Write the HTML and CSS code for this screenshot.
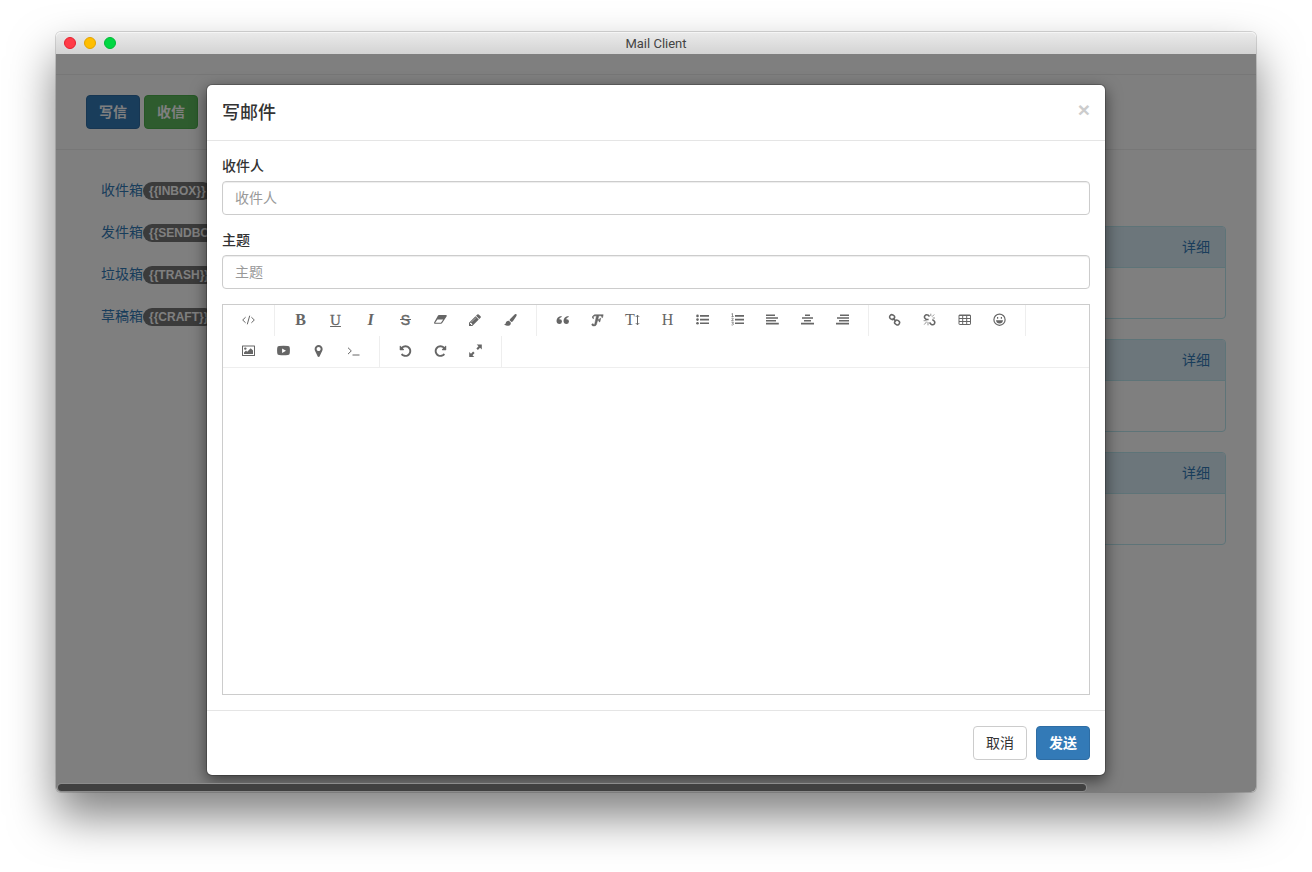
FILE: index.html
```html
<!DOCTYPE html>
<html lang="zh-CN">
<head>
<meta charset="utf-8">
<title>Mail Client</title>
<link rel="stylesheet" href="styles.css">
</head>
<body>
<div class="window">
  <header class="titlebar">
    <div class="lights"><span class="light light-close"></span><span class="light light-min"></span><span class="light light-max"></span></div>
    <div class="titlebar-text">Mail Client</div>
    <div></div>
  </header>
  <div class="stage">
    <div class="page">
      <div class="actions">
        <button class="btn btn-primary" type="button">写信</button>
        <button class="btn btn-success" type="button">收信</button>
      </div>
      <div class="columns">
        <nav class="folders">
          <a href="#inbox">收件箱<span class="badge">{{INBOX}}</span></a>
          <a href="#sendbox">发件箱<span class="badge">{{SENDBOX}}</span></a>
          <a href="#trash">垃圾箱<span class="badge">{{TRASH}}</span></a>
          <a href="#craft">草稿箱<span class="badge">{{CRAFT}}</span></a>
        </nav>
        <main class="mails">
          <article class="panel"><div class="panel-heading"><a href="#mail-1">详细</a></div><div class="panel-body"></div></article>
          <article class="panel"><div class="panel-heading"><a href="#mail-2">详细</a></div><div class="panel-body"></div></article>
          <article class="panel"><div class="panel-heading"><a href="#mail-3">详细</a></div><div class="panel-body"></div></article>
        </main>
      </div>
    </div>
    <div class="backdrop">
      <form class="modal" role="dialog" aria-labelledby="modal-title">
        <div class="modal-header">
          <h4 class="modal-title" id="modal-title">写邮件</h4>
          <button class="close" type="button" aria-label="关闭">×</button>
        </div>
        <div class="modal-body">
          <div class="field">
            <label for="to">收件人</label>
            <input id="to" type="text" placeholder="收件人">
          </div>
          <div class="field">
            <label for="subject">主题</label>
            <input id="subject" type="text" placeholder="主题">
          </div>
          <div class="editor">
            <div class="toolbar">
              <div class="group">
                <button type="button" aria-label="源码"><svg class="line" viewBox="0 0 15 15"><path d="M4.6 4.2L1.7 7l2.9 2.8M10.4 4.2L13.3 7l-2.9 2.8M8.7 2.7L6.3 11.3"/></svg></button>
              </div>
              <div class="group">
                <button type="button" aria-label="粗体"><span class="glyph bold">B</span></button>
                <button type="button" aria-label="下划线"><span class="glyph underline">U</span></button>
                <button type="button" aria-label="斜体"><span class="glyph italic">I</span></button>
                <button type="button" aria-label="删除线"><span class="glyph strike">S</span></button>
                <button type="button" aria-label="清除格式"><svg viewBox="0 0 15 15"><path fill-rule="evenodd" d="M5.9 2h7.3q.9.2.5 1.3L9.2 10q-.5.7-1.200.7H1.600q-.9-.2-.5-1.200L5 2.600Q5.400 2 5.900 2zM4.400 6.400L2.200 9.700h5.700l2.300-3.300z"/></svg></button>
                <button type="button" aria-label="文字颜色"><svg viewBox="0 0 1920 1920"><path d="M491 1536l91-91-235-235-91 91v107h128v128h107zm523-928q0-22-22-22-10 0-17 7l-542 542q-7 7-7 17 0 22 22 22 10 0 17-7l542-542q7-7 7-17zm-54-192l416 416-832 832h-416v-416zm683 96q0 53-37 90l-166 166-416-416 166-165q36-38 90-38 53 0 91 38l235 234q37 39 37 91z"/></svg></button>
                <button type="button" aria-label="背景颜色"><svg viewBox="0 0 15 15"><path d="M12.500 1.100q1.200-.2 1.200 1-.1.700-.6 1.500L9.900 8.300q-.7.800-1.500.8L6.500 7.300q.1-.9.900-1.600l4.200-4.100q.5-.4.900-.5zM5.900 7.800l2 1.900q0 2-1.400 2.700-2.700 1.200-5.100-.8-.3-.5.100-.6.900.3 1.200-.4.200-2.900 3.200-2.800z"/></svg></button>
              </div>
              <div class="group">
                <button type="button" aria-label="引用"><svg viewBox="0 0 15 15"><path d="M6.600 3.100v.8q-2.200.6-2.500 2.300 2.900-.3 2.900 2.300-.2 2.500-2.600 2.600Q1.700 11 1.500 8q.2-4.300 5.100-4.900zM13.600 3.100v.8q-2.200.6-2.500 2.300 2.900-.3 2.900 2.300-.2 2.500-2.600 2.600Q8.700 11 8.500 8q.2-4.300 5.100-4.900z"/></svg></button>
                <button type="button" aria-label="字体"><svg class="script" viewBox="1 0 14 14"><path d="M5.300 1.600h8l-.6 2.700h-.6q.1-1.500-1.200-1.700H9.200L8.300 6h1.300l.9-1.100h.5l-.8 3.400h-.6l-.1-1.200H8l-1 3.600q-.3 1.400-2.400 1.400-1.900 0-2-1.100.1-1.100 1.200-1 .9.200.6 1.200.7.100 1-.9l1.700-7.700Q4.200 2.500 4 3.800q.1.900.7 1.100-.8.500-1.400-.3-.6-1.900 2-3z"/></svg></button>
                <button type="button" aria-label="字号"><span class="glyph">T</span><svg class="line arrow" viewBox="0 0 5 15"><path d="M2.500 2.300v9.400M.8 3.900L2.500 2.200l1.700 1.700M.8 10.100l1.700 1.700 1.700-1.700"/></svg></button>
                <button type="button" aria-label="标题"><span class="glyph heading">H</span></button>
                <button type="button" aria-label="无序列表"><svg viewBox="0 0 15 15"><path d="M5 2h9v1.700H5zM5 5.700h9v1.700H5zM5 9.400h9v1.700H5z"/><circle cx="2.500" cy="2.900" r="1.300"/><circle cx="2.500" cy="6.600" r="1.300"/><circle cx="2.500" cy="10.300" r="1.300"/></svg></button>
                <button type="button" aria-label="有序列表"><svg viewBox="0 0 15 15"><path d="M5 2h9v1.700H5zM5 5.700h9v1.700H5zM5 9.400h9v1.700H5z"/><path class="thin" d="M1.500 1l1-.5v3M1.500 3.500h2.200M1.500 5.300q2-.6 1.900.5L1.600 7.600h2M1.500 9.200h1.900l-.9 1.200q1.200 0 1 1-.5.900-2 .5"/></svg></button>
                <button type="button" aria-label="左对齐"><svg viewBox="0 0 15 15"><path d="M1 1.400h9V3H1zM1 4.200h12v1.600H1zM1 7h10v1.600H1zM1 9.800h12.800v1.600H1z"/></svg></button>
                <button type="button" aria-label="居中"><svg viewBox="0 0 15 15"><path d="M5 1.400h5V3H5zM2 4.200h11v1.600H2zM4 7h7v1.600H4zM1 9.800h13v1.600H1z"/></svg></button>
                <button type="button" aria-label="右对齐"><svg viewBox="0 0 15 15"><path d="M5 1.400h9V3H5zM2 4.200h12v1.600H2zM4 7h10v1.600H4zM1 9.800h13v1.600H1z"/></svg></button>
              </div>
              <div class="group">
                <button type="button" aria-label="链接"><svg class="line thick" viewBox="0 0 15 15"><rect x="2.600" y="1.900" width="5" height="4.400" rx="2.100" transform="rotate(30 5.100 4.100)"/><rect x="7.600" y="7.300" width="5" height="4.400" rx="2.100" transform="rotate(30 10.100 9.500)"/><path d="M5.800 5.100l3.400 3.300"/></svg></button>
                <button type="button" aria-label="取消链接"><svg class="line thick" viewBox="0 0 15 15"><path d="M6.600 6.500H4.300Q1.700 5 2.700 2.900 4.200 1 6.200 2.200L7.500 3.500M7.500 9.400l1.700 1.900q1.900 1.200 3.300-.6 1-2-1-3.300l-1.200-.7"/><path class="thin" d="M8.800 3V.7M10 3.700L12.200 1.500M10.700 5H13M6 9v3.300M4.800 8.600l-2.600 3M4.400 7.700H1.600"/></svg></button>
                <button type="button" aria-label="表格"><svg class="line" viewBox="0 0 15 15"><rect x="2" y="2" width="11.500" height="9.500" rx=".6"/><path d="M2 2.500h11.500M2 5.500h11.500M2 8.500h11.500M5.700 2v9.500M9.700 2v9.500"/></svg></button>
                <button type="button" aria-label="表情"><svg class="line smile" viewBox="0 0 15 15"><circle cx="7.500" cy="6.700" r="5.600"/><path fill="#666" stroke="none" d="M4 7.300h7q-.5 3.200-3.500 3.200T4 7.300z"/><path d="M5.600 3.900v1.800M9.400 3.900v1.800"/></svg></button>
              </div>
              <div class="group">
                <button type="button" aria-label="图片"><svg viewBox="0 0 15 15"><path fill-rule="evenodd" d="M1.500 1.500h12q.5 0 .5.500v9.500q0 .5-.5.500h-12q-.5 0-.5-.5V2q0-.5.5-.5zM2 2.500V11h11V2.500z"/><circle cx="4.300" cy="4.600" r="1.200"/><path d="M3 10V8.500l2-2 1.200 1.200 3.500-3.500L12 6.500V10z"/></svg></button>
                <button type="button" aria-label="视频"><svg viewBox="0 0 15 15"><path fill-rule="evenodd" d="M3 2q4.500-.5 9 0 1.800.1 1.800 2.100.3 2.400 0 4.900-.2 1.800-1.800 2-4.500.5-9 0-1.700-.1-1.800-2-.3-2.500 0-4.900Q1.300 2.100 3 2zm3.100 2.400v4.500l3.900-2.200z"/></svg></button>
                <button type="button" aria-label="位置"><svg viewBox="-80 0 1920 1920"><path d="M1152 640q0-106-75-181t-181-75-181 75-75 181 75 181 181 75 181-75 75-181zm256 0q0 109-33 179l-364 774q-16 33-47.500 52t-67.500 19-67.500-19-46.500-52l-365-774q-33-70-33-179 0-212 150-362t362-150 362 150 150 362z"/></svg></button>
                <button type="button" aria-label="代码"><svg class="line" viewBox="0 0 15 15"><path d="M2 3.700l3.300 3.200L2 10.100M6.500 11H13.500"/></svg></button>
              </div>
              <div class="group">
                <button type="button" aria-label="撤销"><svg viewBox="-100 -50 2000 2000"><path d="M1664 896q0 156-61 298t-164 245-245 164-298 61q-172 0-327-72.500t-264-204.500q-7-10-6.500-22.500t8.500-20.500l137-138q10-9 25-9 16 2 23 12 73 95 179 147t225 52q104 0 198.500-40.500t163.500-109.500 109.500-163.500 40.500-198.500-40.500-198.500-109.500-163.500-163.500-109.500-198.500-40.500q-98 0-188 35.500t-160 101.500l137 138q31 30 14 69-17 40-59 40h-448q-26 0-45-19t-19-45v-448q0-42 40-59 39-17 69 14l130 129q107-101 244.500-156.500t284.500-55.500q156 0 298 61t245 164 164 245 61 298z"/></svg></button>
                <button type="button" aria-label="重做"><svg viewBox="-100 -50 2000 2000"><path transform="translate(1792) scale(-1 1)" d="M1664 896q0 156-61 298t-164 245-245 164-298 61q-172 0-327-72.500t-264-204.500q-7-10-6.500-22.500t8.500-20.500l137-138q10-9 25-9 16 2 23 12 73 95 179 147t225 52q104 0 198.500-40.500t163.500-109.500 109.500-163.500 40.500-198.500-40.500-198.500-109.500-163.500-163.500-109.500-198.500-40.500q-98 0-188 35.500t-160 101.500l137 138q31 30 14 69-17 40-59 40h-448q-26 0-45-19t-19-45v-448q0-42 40-59 39-17 69 14l130 129q107-101 244.500-156.500t284.500-55.500q156 0 298 61t245 164 164 245 61 298z"/></svg></button>
                <button type="button" aria-label="全屏"><svg viewBox="0 0 15 15"><path d="M8.700.5h5.100v5.100L12 3.800 9.900 5.900 8.400 4.400l2.100-2.100zM1.200 7.900L3 9.700l2.100-2.100 1.500 1.500-2.100 2.100L6.300 13H1.200z"/></svg></button>
              </div>
            </div>
            <textarea aria-label="邮件正文"></textarea>
          </div>
        </div>
        <div class="modal-footer">
          <button class="btn btn-default" type="button">取消</button>
          <button class="btn btn-primary" type="submit">发送</button>
        </div>
      </form>
    </div>
    <div class="scrollbar"></div>
  </div>
</div>
</body>
</html>
```
FILE: styles.css
```css
* { box-sizing: border-box; }

body {
  margin: 0;
  min-height: 100vh;
  padding: 32px 56px 80px;
  display: flex;
  background: #fff;
  color: #333;
  font-family: "Liberation Sans", "Noto Sans CJK SC", sans-serif;
  font-size: 14px;
  line-height: 20px;
}

a { color: #337ab7; text-decoration: none; }

button, input, textarea { font: inherit; color: inherit; }

/* Application window */
.window {
  flex: 1;
  min-width: 0;
  display: flex;
  flex-direction: column;
  border-radius: 5px;
  box-shadow: 0 0 0 1px rgba(0, 0, 0, .15), 0 24px 46px rgba(0, 0, 0, .5);
}

.titlebar {
  display: grid;
  grid-template-columns: 1fr auto 1fr;
  align-items: center;
  height: 22px;
  padding: 0 8px;
  border-radius: 5px 5px 0 0;
  background: linear-gradient(#ebebeb, #d3d3d3);
  box-shadow: inset 0 1px 0 #f5f5f5;
}

.lights { display: flex; gap: 8px; }

.light { width: 12px; height: 12px; border-radius: 50%; border: 1px solid; }
.light-close { background: #ff3b47; border-color: #e5202f; }
.light-min { background: #ffbe00; border-color: #e3a300; }
.light-max { background: #00d742; border-color: #00b935; }

.titlebar-text {
  padding-top: 2px;
  font-family: Roboto, sans-serif;
  font-size: 13px;
  color: #444;
}

.stage {
  position: relative;
  flex: 1;
  overflow: hidden;
  border-radius: 0 0 5px 5px;
  background: #fff;
}

/* Mailbox page */
.page { padding-top: 20px; }

.actions {
  display: flex;
  gap: 4px;
  padding: 20px 30px;
  border: solid #eee;
  border-width: 1px 0;
}

.columns {
  display: grid;
  grid-template-columns: 1fr 5fr;
  gap: 30px;
  padding: 20px 30px;
}

.folders { display: flex; flex-direction: column; gap: 2px; }
.folders a { display: flex; align-items: center; padding: 10px 15px; }

.badge {
  margin-top: 2px;
  padding: 3px 6px;
  border-radius: 10px;
  background: #777;
  color: #fff;
  font-size: 12px;
  font-weight: 700;
  line-height: 12px;
}

.mails { display: flex; flex-direction: column; gap: 20px; padding-top: 56px; }
.panel { border: 1px solid #bce8f1; border-radius: 4px; }
.panel-heading {
  padding: 10px 15px;
  border-bottom: 1px solid #bce8f1;
  border-radius: 3px 3px 0 0;
  background: #d9edf7;
  text-align: right;
}
.panel-body { height: 50px; }

/* Buttons */
.btn {
  padding: 6px 12px;
  border: 1px solid;
  border-radius: 4px;
}
.btn-default { background: #fff; border-color: #ccc; }
.btn-primary { background: #337ab7; border-color: #2e6da4; color: #fff; font-weight: 600; }
.btn-success { background: #5cb85c; border-color: #4cae4c; color: #fff; font-weight: 600; }

/* Compose dialog */
.backdrop {
  position: absolute;
  inset: 0;
  padding: 30px;
  background: rgba(0, 0, 0, .5);
}

.modal {
  max-width: 900px;
  margin: 0 auto;
  border: 1px solid rgba(0, 0, 0, .2);
  border-radius: 6px;
  background: #fff;
  background-clip: padding-box;
  box-shadow: 0 5px 15px rgba(0, 0, 0, .5);
}

.modal-header {
  display: flex;
  justify-content: space-between;
  padding: 16px 15px 14px;
  border-bottom: 1px solid #e5e5e5;
}
.modal-title { margin: 0; font-size: 18px; font-weight: 500; line-height: 25px; }

.close {
  align-self: flex-start;
  padding: 0;
  border: 0;
  background: none;
  color: #ccc;
  font-size: 21px;
  font-weight: 700;
  line-height: 18px;
}

.modal-body { padding: 15px; }

.field { display: flex; flex-direction: column; gap: 5px; margin-bottom: 15px; }
.field label { font-weight: 500; }
.field input {
  height: 34px;
  padding: 6px 12px;
  border: 1px solid #ccc;
  border-radius: 4px;
  background: #fff;
  box-shadow: inset 0 1px 1px rgba(0, 0, 0, .075);
}
.field input::placeholder { color: #999; opacity: 1; }

.editor { border: 1px solid #ccc; }
.toolbar { display: flex; flex-wrap: wrap; border-bottom: 1px solid #eee; }
.group { display: flex; padding: 0 8px; border-right: 1px solid #eee; }
.group button {
  display: flex;
  align-items: center;
  justify-content: center;
  width: 35px;
  height: 31px;
  padding: 0;
  border: 0;
  background: none;
  color: #666;
}
.group svg { width: 15px; height: 15px; fill: #666; }
.group .arrow { width: 5px; }
.group .script { stroke: #666; stroke-width: .5; }
.group .line { fill: none; stroke: #666; stroke-width: 1; }
.group .smile { stroke-width: 1.2; }
.group .thick { stroke-width: 1.5; }
.group .thin { fill: none; stroke: #666; stroke-width: .7; }

.glyph {
  padding-bottom: 2px;
  font-family: "Liberation Serif", serif;
  font-size: 16px;
  line-height: 16px;
}
.bold { font-weight: 700; }
.underline { font-size: 15px; text-decoration: underline; -webkit-text-stroke: 0.3px #666; }
.italic { font-weight: 700; font-style: italic; }
.strike {
  padding: 0 1px 2px;
  background: linear-gradient(#666, #666) center 7px / 100% 1px no-repeat;
  font-family: "Liberation Sans", sans-serif;
  font-size: 14px;
  -webkit-text-stroke: 0.4px #666;
}

textarea {
  display: block;
  width: 100%;
  height: 326px;
  padding: 10px;
  border: 0;
  outline: 0;
  resize: none;
  background: #fff;
}

.modal-footer {
  display: flex;
  justify-content: flex-end;
  gap: 9px;
  padding: 15px;
  border-top: 1px solid #e5e5e5;
}

/* Overlay scrollbar at the bottom of the window */
.scrollbar {
  position: absolute;
  left: 2px;
  right: 170px;
  bottom: 1px;
  height: 7px;
  border-radius: 4px;
  background: #404040;
  box-shadow: 0 0 0 1px #8c8c8c;
}
```
